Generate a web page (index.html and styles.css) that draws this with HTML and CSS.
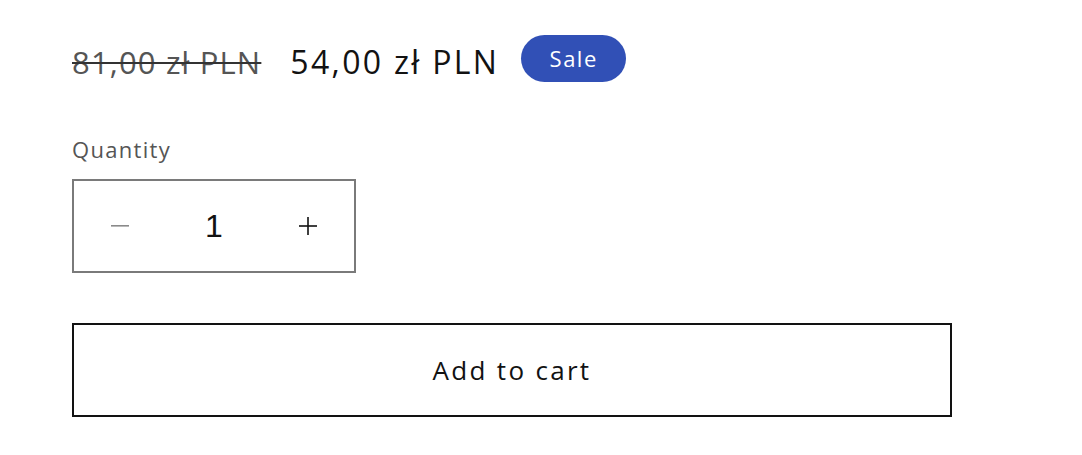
FILE: index.html
```html
<!DOCTYPE html>
<html lang="en">
<head>
<meta charset="utf-8">
<link rel="stylesheet" href="styles.css">
</head>
<body>
<div class="product">
  <div class="price-row">
    <s class="price-old">81,00 zł PLN</s>
    <span class="price-new">54,00 zł PLN</span>
    <span class="badge">Sale</span>
  </div>
  <label class="qty-label">Quantity</label>
  <div class="qty">
    <button class="qty-btn minus" aria-label="Decrease">
      <svg width="18" height="2" viewBox="0 0 18 2"><rect x="0" y="0" width="18" height="1.6" fill="#8a8a8a"/></svg>
    </button>
    <span class="qty-value">1</span>
    <button class="qty-btn plus" aria-label="Increase">
      <svg width="18" height="18" viewBox="0 0 18 18"><rect x="0" y="8.2" width="18" height="1.6" fill="#121212"/><rect x="8.2" y="0" width="1.6" height="18" fill="#121212"/></svg>
    </button>
  </div>
  <button class="add-cart">Add to cart</button>
</div>
</body>
</html>
```
FILE: styles.css
```css
html, body {
  margin: 0;
  padding: 0;
  background: #ffffff;
}
body {
  font-family: "Open Sans", "Noto Sans", sans-serif;
  color: #121212;
}
.product {
  padding: 35px 0 0 72px;
  display: flex;
  flex-direction: column;
  align-items: flex-start;
}
.price-row {
  display: flex;
  align-items: center;
  height: 47px;
}
.price-old {
  font-size: 31px;
  color: #555555;
  letter-spacing: 1.15px;
  text-decoration-thickness: 2px;
  text-decoration-color: #333333;
  margin-right: 29px;
  position: relative;
  top: 3px;
}
.price-new {
  font-size: 32px;
  color: #121212;
  letter-spacing: 2.3px;
  margin-right: 22px;
  position: relative;
  top: 3px;
}
.badge {
  background: #3150b6;
  color: #ffffff;
  font-size: 22px;
  font-weight: 500;
  letter-spacing: 1.5px;
  height: 47px;
  width: 105px;
  border-radius: 24px;
  display: flex;
  align-items: center;
  justify-content: center;
  box-sizing: border-box;
  padding-bottom: 2px;
}
.qty-label {
  margin-top: 52px;
  font-size: 22px;
  color: #555555;
  letter-spacing: 1.3px;
  line-height: 30px;
}
.qty {
  margin-top: 15px;
  width: 284px;
  height: 94px;
  box-sizing: border-box;
  border: 2px solid #7a7a7a;
  display: flex;
  align-items: center;
  justify-content: space-between;
  padding: 0 28px 0 28px;
}
.qty-btn {
  border: 0;
  background: none;
  padding: 0;
  width: 36px;
  height: 36px;
  display: flex;
  align-items: center;
  justify-content: center;
}
.qty-value {
  font-family: "Liberation Sans", Arial, sans-serif;
  font-size: 32px;
  color: #121212;
}
.add-cart {
  margin-top: 50px;
  width: 880px;
  height: 94px;
  box-sizing: border-box;
  border: 2px solid #121212;
  background: #ffffff;
  font-family: "Open Sans", "Noto Sans", sans-serif;
  font-size: 26px;
  letter-spacing: 2.3px;
  color: #121212;
  padding: 0;
}
```
